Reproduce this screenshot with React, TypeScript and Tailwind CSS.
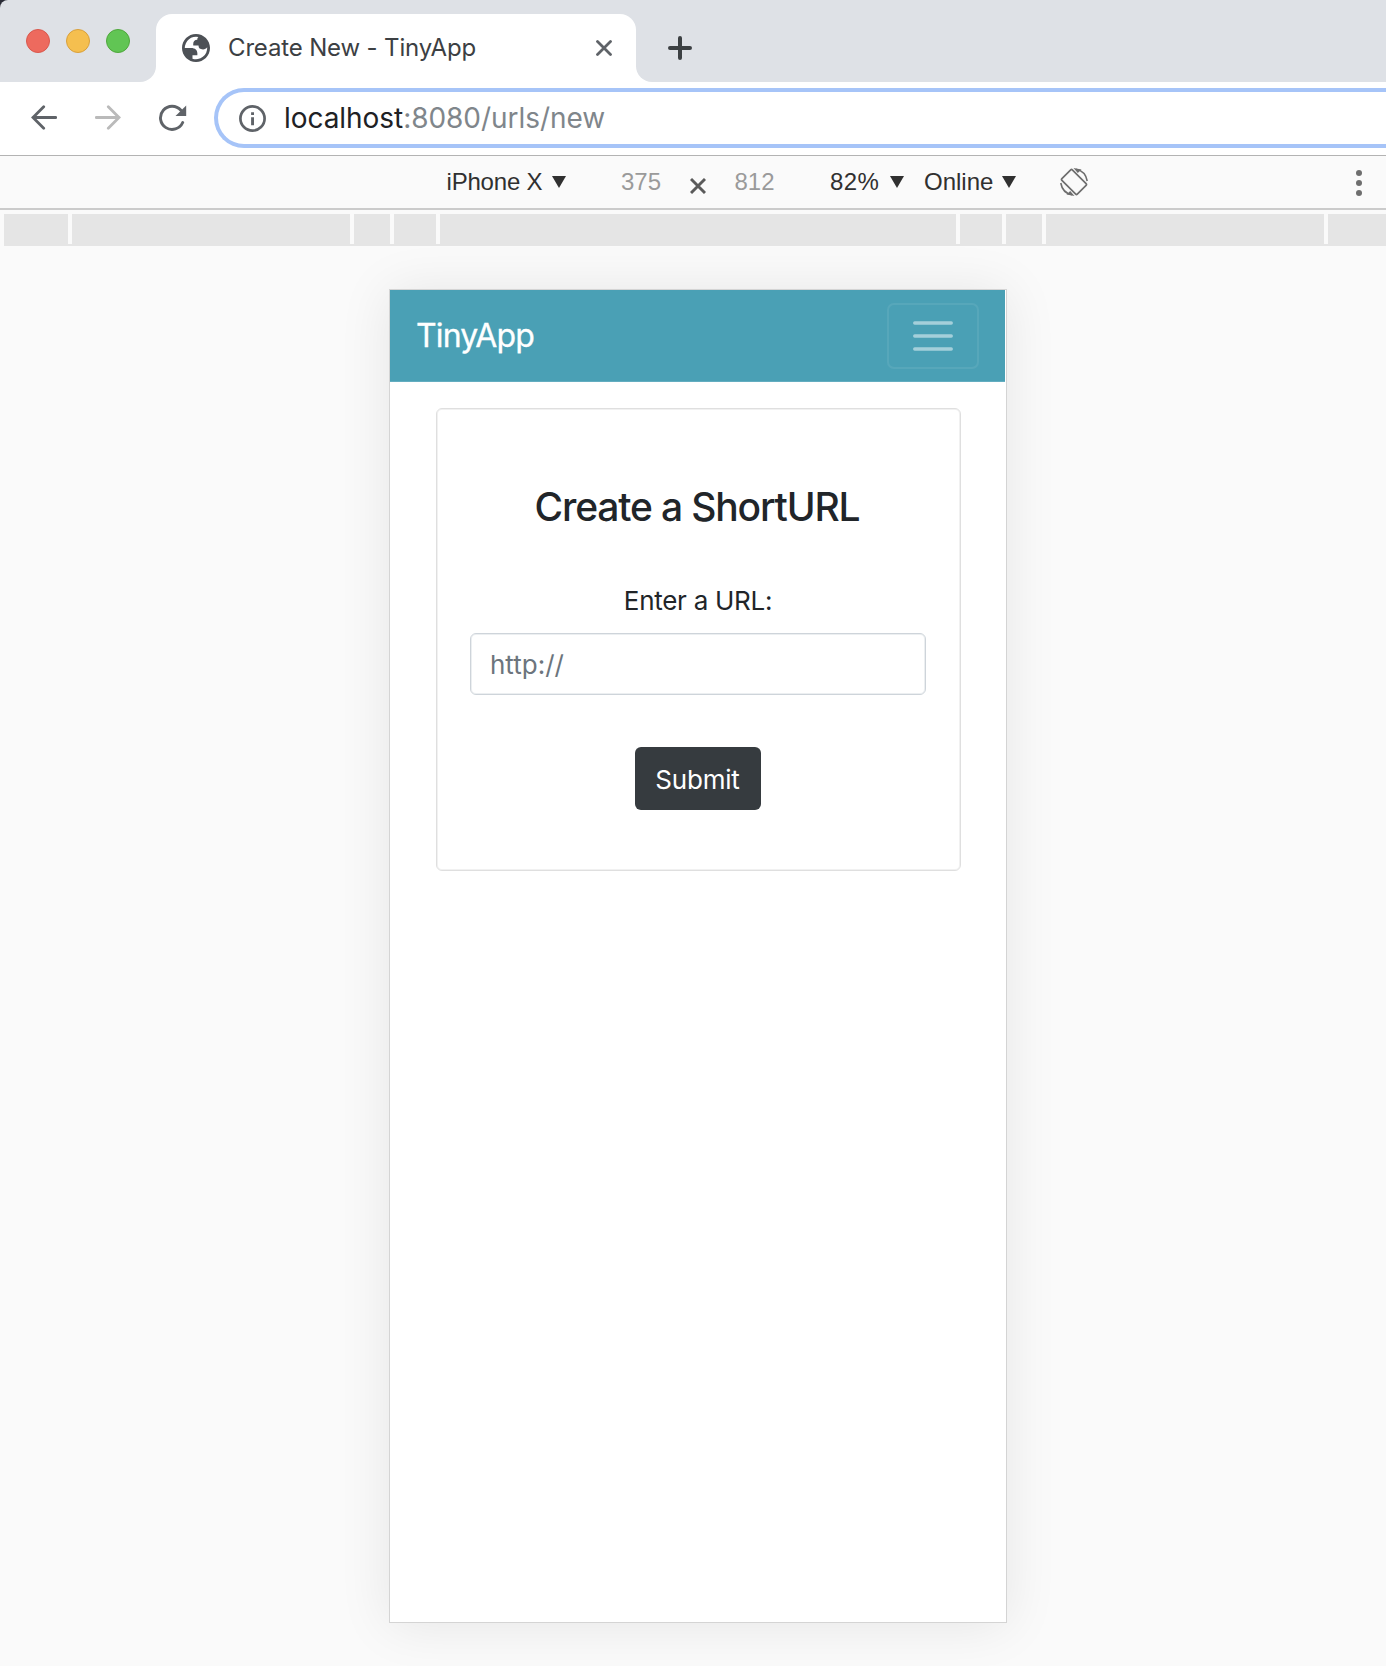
import React from "react";

function TrafficLight({ className }: { className: string }) {
  return <span className={`size-6 rounded-full border ${className}`} />;
}

function TabFlare({ className }: { className: string }) {
  return (
    <span className="h-4 w-4 self-end bg-white">
      <span className={`block h-4 w-4 bg-[#dee1e6] ${className}`} />
    </span>
  );
}

function TabStrip() {
  return (
    <div className="bg-[#2a2b36]">
      <div className="flex h-[82px] rounded-tl-[8px] bg-[#dee1e6]">
        <div className="ml-[26px] mt-[29px] flex w-[114px] shrink-0 gap-4">
          <TrafficLight className="border-[#d9584d] bg-[#ed6a5e]" />
          <TrafficLight className="border-[#d9a03c] bg-[#f5bf4f]" />
          <TrafficLight className="border-[#4fa73c] bg-[#61c554]" />
        </div>
        <TabFlare className="rounded-br-[16px]" />
        <div className="mt-[14px] flex w-[480px] shrink-0 items-center rounded-t-[16px] bg-white pl-[26px] pr-6">
          <svg width="28" height="28" viewBox="2 2 20 20" className="shrink-0">
            <path
              fill="#4d5156"
              fillRule="evenodd"
              d="M12 2C6.48 2 2 6.48 2 12s4.48 10 10 10 10-4.48 10-10S17.52 2 12 2zM4 12h4.4c3.407.022 4.922 1.73 4.543 5.127H9.488v2.47a8.004 8.004 0 0 0 10.498-8.083C19.327 12.504 18.332 13 17 13c-2.137 0-3.206-.916-3.206-2.75h-3.748c-.274-2.728.683-4.092 2.87-4.092 0-.975.327-1.597.811-1.97A8.004 8.004 0 0 0 4 12z"
            />
          </svg>
          <span className="ml-[18px] -mt-px whitespace-nowrap text-[24px] leading-7 tracking-[-0.15px] text-[#3c4043]">
            Create New - TinyApp
          </span>
          <svg width="16" height="16" viewBox="0 0 16 16" className="ml-auto shrink-0">
            <path d="M1.5 1.5l13 13M14.5 1.5l-13 13" stroke="#5f6368" strokeWidth="2.8" strokeLinecap="round" />
          </svg>
        </div>
        <TabFlare className="rounded-bl-[16px]" />
        <svg width="24" height="24" viewBox="0 0 24 24" className="ml-4 mt-9 shrink-0">
          <path d="M12 2v20M2 12h20" stroke="#3c4043" strokeWidth="4" strokeLinecap="round" />
        </svg>
      </div>
    </div>
  );
}

function Toolbar() {
  return (
    <div className="flex h-[74px] border-b border-[#b3b3b3] bg-white">
      <svg width="26" height="26" viewBox="0 0 26 26" className="ml-[31px] mt-[23px] shrink-0">
        <path d="M24.7 12.5H2M12.7 1.8L2 12.5l10.7 10.7" fill="none" stroke="#5f6368" strokeWidth="2.8" strokeLinecap="round" />
      </svg>
      <svg width="26" height="26" viewBox="0 0 26 26" className="ml-[38px] mt-[23px] shrink-0">
        <path d="M1.3 12.5H24M13.3 1.8L24 12.5 13.3 23.2" fill="none" stroke="#bababa" strokeWidth="2.8" strokeLinecap="round" />
      </svg>
      <svg width="28" height="28" viewBox="0 0 28 28" className="ml-[38px] mt-[22px] shrink-0">
        <path d="M23.7 18.5A11.6 11.6 0 1 1 21.9 6.3" fill="none" stroke="#5f6368" strokeWidth="2.9" strokeLinecap="round" />
        <path d="M27.2 1.5V12H16.5z" fill="#5f6368" />
      </svg>
      <div className="ml-[27px] mt-[6px] flex h-[60px] flex-1 items-center rounded-l-[30px] border-4 border-r-0 border-[#a6c4f8] bg-white pl-[21px]">
        <svg width="27" height="27" viewBox="0 0 27 27" className="shrink-0">
          <circle cx="13.5" cy="13.5" r="12.1" fill="none" stroke="#5f6368" strokeWidth="2.7" />
          <path d="M12.1 12.3h2.9v8h-2.9zM12.1 7.2h2.9v2.7h-2.9z" fill="#5f6368" />
        </svg>
        <span className="ml-[18px] whitespace-nowrap text-[28px] leading-8 tracking-[-0.05px] text-[#80868b]">
          <span className="text-[#202124]">localhost</span>:8080/urls/new
        </span>
      </div>
    </div>
  );
}

function Caret() {
  return (
    <svg width="14" height="12" viewBox="0 0 14 12" className="-mt-px shrink-0">
      <path d="M0 0h14L7 12z" fill="#303030" />
    </svg>
  );
}

function DeviceBar() {
  return (
    <div className="flex h-[54px] items-center border-b-2 border-[#cbcbcb] bg-[#fafafa] pr-6 font-['Liberation_Sans',Arial,sans-serif] text-[24px] leading-[52px] text-[#303030]">
      <span className="ml-[446.5px] w-[105.5px] whitespace-nowrap tracking-[-0.2px]">iPhone X</span>
      <Caret />
      <span className="ml-[55px] w-[69px] text-[#9a9a9a]">375</span>
      <svg width="16" height="16" viewBox="0 0 16 16" className="mt-[7px] shrink-0">
        <path d="M1 1l14 14M15 1L1 15" stroke="#5a5a5a" strokeWidth="2.9" />
      </svg>
      <span className="ml-[28.5px] w-[95.5px] text-[#9a9a9a]">812</span>
      <span className="w-[60px] tracking-[0.4px]">82%</span>
      <Caret />
      <span className="ml-5 w-[78px]">Online</span>
      <Caret />
      <svg width="28" height="28" viewBox="0 0 28 28" fill="none" stroke="#6e6e6e" className="ml-[44px] shrink-0">
        <path d="M1.9 10.7L10.7 1.9q.8-.8 1.6 0L26.1 15.7q.8.8 0 1.6L17.3 26.1q-.8.8-1.6 0L1.9 12.3q-.8-.8 0-1.6z" strokeWidth="1.7" />
        <path d="M16 1.2Q25.5 3 27.2 13M12 26.8Q2.5 25 .8 15" strokeWidth="1.6" />
        <path d="M13.5 0l8 1.4-3.7 3.6zM14.5 28l-8-1.4 3.7-3.6z" fill="#6e6e6e" stroke="none" />
      </svg>
      <svg width="6" height="26" viewBox="0 0 6 26" fill="#6e6e6e" className="ml-auto mt-[2px] shrink-0">
        <circle cx="3" cy="3" r="3" />
        <circle cx="3" cy="13" r="3" />
        <circle cx="3" cy="23" r="3" />
      </svg>
    </div>
  );
}

function BreakpointRuler() {
  return (
    <div className="mt-1 ml-1 flex h-8 shrink-0 border-b-2 border-[#e5e5e5] bg-[#fafafa]">
      <div className="flex flex-1 gap-1">
        <span className="w-16 bg-[#e5e5e5]" />
        <span className="w-[278px] bg-[#e5e5e5]" />
        <span className="w-9 bg-[#e5e5e5]" />
        <span className="w-[42px] bg-[#e5e5e5]" />
        <span className="w-[516px] bg-[#e5e5e5]" />
        <span className="w-[42px] bg-[#e5e5e5]" />
        <span className="w-9 bg-[#e5e5e5]" />
        <span className="w-[278px] bg-[#e5e5e5]" />
        <span className="flex-1 bg-[#e5e5e5]" />
      </div>
    </div>
  );
}

function Navbar() {
  return (
    <nav className="mr-px flex h-[92px] items-center justify-between border-b border-[#63adc0] bg-[#4aa0b5] px-[26px]">
      <span className="mt-px text-[32px] leading-10 tracking-[-0.85px] text-white [-webkit-text-stroke:0.3px_white]">TinyApp</span>
      <button className="flex h-[66px] w-[92px] items-center justify-center rounded-[7px] border-2 border-white/7">
        <svg width="40" height="30" viewBox="0 0 40 30" stroke="#a4cfda" strokeWidth="3.3" strokeLinecap="round">
          <path d="M1.7 2h36.6M1.7 15h36.6M1.7 28h36.6" />
        </svg>
      </button>
    </nav>
  );
}

function CreateForm() {
  return (
    <form className="ml-[46px] mt-[26px] flex h-[463px] w-[525px] flex-col items-center rounded-[6px] border border-[#dfdfdf] pr-px shadow-[inset_0_0_0_1px_#f1f1f1]">
      <h1 className="-ml-[2px] mt-[74px] whitespace-nowrap text-[39px] font-medium leading-[48px] tracking-[-1.16px] text-[#212529]">
        Create a ShortURL
      </h1>
      <label className="mt-[49px] whitespace-nowrap text-[26px] leading-[42px] tracking-[-0.28px] text-[#212529]">Enter a URL:</label>
      <input
        placeholder="http://"
        className="mt-[11px] h-[62px] w-[456px] rounded-[6px] border border-[#ced4da] bg-white px-[19px] text-[26px] shadow-[inset_0_0_0_1px_#eceff1] placeholder:text-[#6c757d]"
      />
      <button
        type="button"
        className="-ml-px mt-[52px] h-[63px] w-[126px] rounded-[6px] bg-[#363b3f] text-[26px] leading-[65px] tracking-[-0.2px] text-white"
      >
        Submit
      </button>
    </form>
  );
}

export default function App() {
  return (
    <div className="flex h-[1666px] w-[1386px] flex-col overflow-hidden bg-[#fafafa] font-[Inter,sans-serif]">
      <TabStrip />
      <Toolbar />
      <DeviceBar />
      <BreakpointRuler />
      <main className="ml-[389px] mt-[43px] h-[1334px] w-[618px] shrink-0 border border-[#d4d4d4] bg-white shadow-[0_2px_50px_rgba(0,0,0,0.085)]">
        <Navbar />
        <CreateForm />
      </main>
    </div>
  );
}
